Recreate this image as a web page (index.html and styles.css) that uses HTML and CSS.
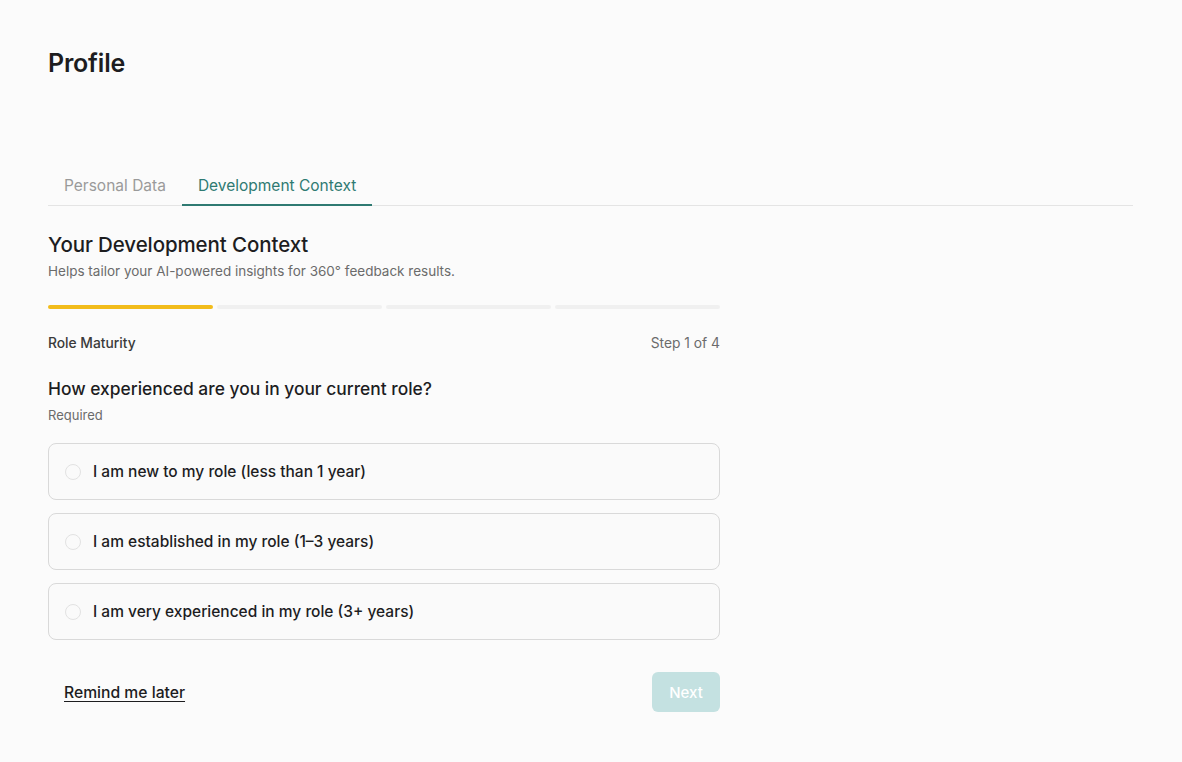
FILE: index.html
```html
<!DOCTYPE html>
<html lang="en">
<head>
  <meta charset="UTF-8">
  <meta name="viewport" content="width=device-width, initial-scale=1.0">
  <title>Profile</title>
  <link rel="stylesheet" href="styles.css">
</head>
<body>
  <div class="page">
    <h1 class="page-title">Profile</h1>

    <!-- Abas do perfil -->
    <nav class="tabs">
      <a class="tab">Personal Data</a>
      <a class="tab active">Development Context</a>
    </nav>

    <div class="context-card">
      <h2>Your Development Context</h2>
      <p class="subtitle">Helps tailor your AI-powered insights for 360° feedback results.</p>

      <div class="progress">
        <span class="segment done"></span>
        <span class="segment"></span>
        <span class="segment"></span>
        <span class="segment"></span>
      </div>

      <div class="step-header">
        <span class="step-name">Role Maturity</span>
        <span class="step-count">Step 1 of 4</span>
      </div>

      <h3 class="question">How experienced are you in your current role?</h3>
      <p class="required">Required</p>

      <div class="options">
        <label class="option">
          <input type="radio" name="maturity" value="new">
          <span>I am new to my role (less than 1 year)</span>
        </label>
        <label class="option">
          <input type="radio" name="maturity" value="established">
          <span>I am established in my role (1–3 years)</span>
        </label>
        <label class="option">
          <input type="radio" name="maturity" value="experienced">
          <span>I am very experienced in my role (3+ years)</span>
        </label>
      </div>

      <div class="actions">
        <a class="remind" href="#">Remind me later</a>
        <button class="btn-next" disabled>Next</button>
      </div>
    </div>
  </div>
</body>
</html>
```

FILE: styles.css
```css
/* Cores base */
:root {
  --bg: #fbfbfb;
  --text: #1d1d1f;
  --muted: #6b6b6b;
  --teal: #2f7a72;
  --teal-light: #c4e1e1;
  --yellow: #f2bc1b;
  --line: #e4e4e4;
  --border: #d9d9d9;
}

* {
  box-sizing: border-box;
  margin: 0;
  padding: 0;
}

body {
  background: var(--bg);
  color: var(--text);
  font-family: 'Inter', 'Noto Sans', sans-serif;
  min-height: 100vh;
}

.page {
  padding: 48px 49px 40px 48px;
}

.page-title {
  font-size: 25px;
  font-weight: 600;
  letter-spacing: -0.2px;
  line-height: 30px;
}

/* Abas */
.tabs {
  display: flex;
  margin-top: 98px;
  border-bottom: 1px solid var(--line);
}
.tab {
  padding: 0 16px 8px;
  font-size: 15.5px;
  color: #9a9a9a;
  line-height: 20px;
  cursor: pointer;
  border-bottom: 2px solid transparent;
  margin-bottom: -1px;
}
.tab.active {
  color: var(--teal);
  border-bottom-color: var(--teal);
}

.context-card {
  width: 672px;
  padding-top: 27px;
}

.context-card h2 {
  font-size: 20.5px;
  font-weight: 500;
  line-height: 24px;
  letter-spacing: -0.1px;
}
.subtitle {
  margin-top: 6px;
  font-size: 13.5px;
  color: var(--muted);
  line-height: 16px;
}

/* Barra de progresso em 4 etapas */
.progress {
  display: grid;
  grid-template-columns: repeat(4, 1fr);
  gap: 4px;
  margin-top: 26px;
}
.segment {
  height: 4px;
  border-radius: 2px;
  background: #f0f0f0;
}
.segment.done {
  background: var(--yellow);
}

.step-header {
  display: flex;
  justify-content: space-between;
  margin-top: 26px;
  font-size: 13.8px;
  line-height: 16px;
}
.step-name {
  font-weight: 500;
  color: #3a3a3a;
}
.step-count {
  color: var(--muted);
}

.question {
  margin-top: 27px;
  font-size: 17.4px;
  font-weight: 500;
  line-height: 22px;
}
.required {
  margin-top: 7px;
  font-size: 13px;
  color: var(--muted);
  line-height: 16px;
}

.options {
  display: flex;
  flex-direction: column;
  gap: 13px;
  margin-top: 20px;
}
.option {
  display: flex;
  align-items: center;
  gap: 12px;
  height: 57px;
  padding: 0 16px;
  border: 1px solid var(--border);
  border-radius: 8px;
  background: #fafafa;
  font-size: 15.5px;
  font-weight: 500;
  cursor: pointer;
}
.option input {
  appearance: none;
  width: 16px;
  height: 16px;
  margin-left: 0;
  border: 1.5px solid #e2e2e2;
  border-radius: 50%;
  background: #fafafa;
}

.actions {
  display: flex;
  justify-content: space-between;
  align-items: center;
  margin-top: 32px;
  padding-left: 16px;
}
.remind {
  font-size: 15.7px;
  font-weight: 500;
  color: var(--text);
  text-decoration: underline;
  text-underline-offset: 3px;
}
.btn-next {
  width: 68px;
  height: 40px;
  border: none;
  border-radius: 6px;
  background: var(--teal-light);
  color: #fff;
  font-family: inherit;
  font-size: 15px;
  font-weight: 500;
}
```
